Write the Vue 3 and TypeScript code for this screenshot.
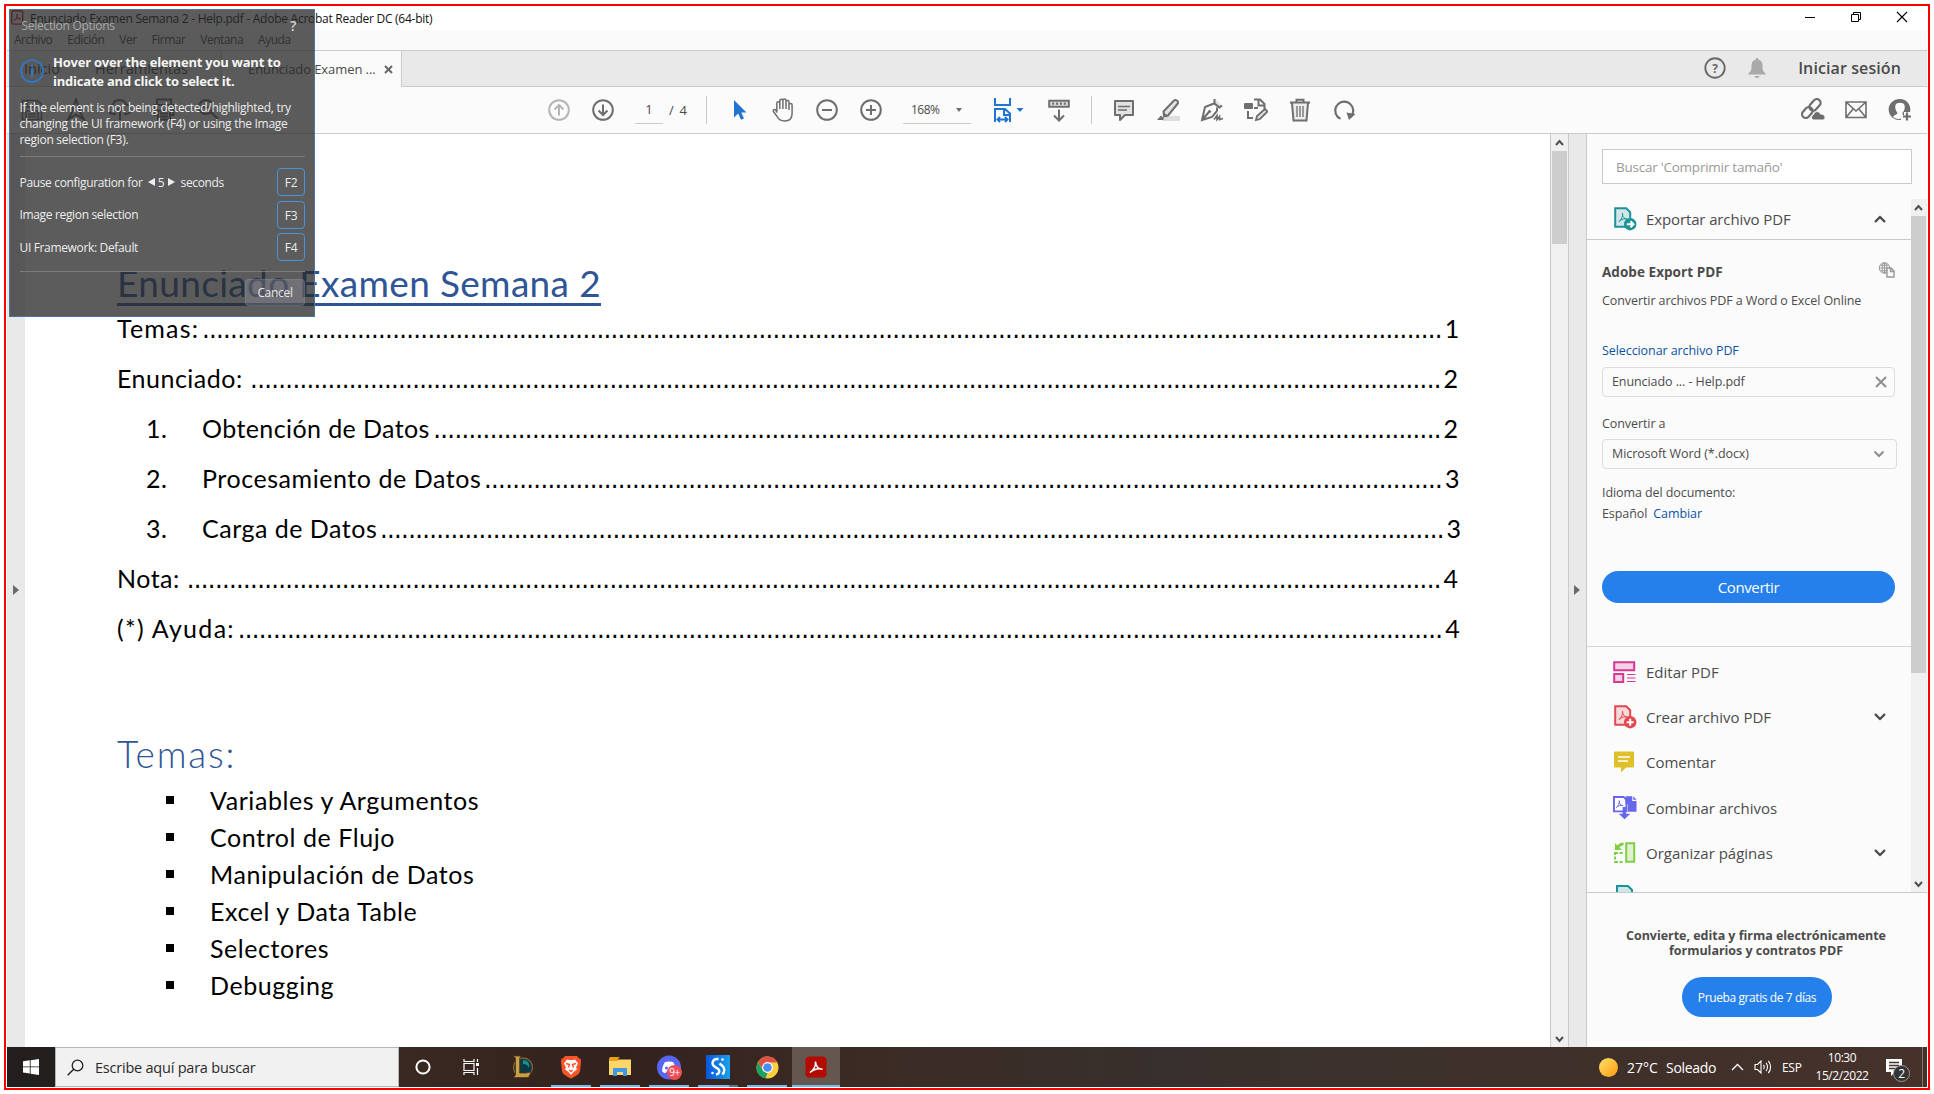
<script setup lang="ts">
interface TocRow { label: string; page: number; dots: number; num?: string }

const menus: string[] = ['Archivo', 'Edición', 'Ver', 'Firmar', 'Ventana', 'Ayuda']
const toc: TocRow[] = [
  { label: 'Temas:', page: 1, dots: 176 },
  { label: 'Enunciado:', page: 2, dots: 169 },
  { label: 'Obtención de Datos', page: 2, dots: 143, num: '1.' },
  { label: 'Procesamiento de Datos', page: 3, dots: 136, num: '2.' },
  { label: 'Carga de Datos', page: 3, dots: 151, num: '3.' },
  { label: 'Nota:', page: 4, dots: 178 },
  { label: '(*) Ayuda:', page: 4, dots: 171 },
]
const topics: string[] = [
  'Variables y Argumentos', 'Control de Flujo', 'Manipulación de Datos',
  'Excel y Data Table', 'Selectores', 'Debugging',
]
const tools = [
  { id: 'edit', label: 'Editar PDF', more: false },
  { id: 'create', label: 'Crear archivo PDF', more: true },
  { id: 'comment', label: 'Comentar', more: false },
  { id: 'combine', label: 'Combinar archivos', more: false },
  { id: 'organize', label: 'Organizar páginas', more: true },
]
const shortcuts = [
  { id: 'pause', label: 'Pause configuration for', key: 'F2' },
  { id: 'image', label: 'Image region selection', key: 'F3' },
  { id: 'frame', label: 'UI Framework: Default', key: 'F4' },
]
</script>

<template>
  <div class="screen">
    <div class="desktop">
      <header class="titlebar">
        <svg class="app-icon" width="13" height="15" viewBox="0 0 13 15"><rect x=".7" y=".7" width="11" height="13.4" rx="2" fill="#fff" stroke="#d3222a" stroke-width="1.4" /><path d="M3 10.500c2-1 3.400-4.200 3.200-6.300M5.800 4.200c0 2.600 1.700 4.800 4 4.600M3 10.500c1.500-1.800 4.300-2.400 6.800-1.700" fill="none" stroke="#d3222a" stroke-width="1" /></svg>
        <span class="title">Enunciado Examen Semana 2 - Help.pdf - Adobe Acrobat Reader DC (64-bit)</span>
        <div class="win-buttons">
          <svg width="12" height="12" viewBox="0 0 12 12"><path d="M1 6.500h10" stroke="#000" /></svg>
          <svg width="12" height="12" viewBox="0 0 12 12"><path d="M1.500 3.500h7v7h-7zM3.500 3.500v-2h7v7h-2" fill="none" stroke="#000" /></svg>
          <svg width="12" height="12" viewBox="0 0 12 12"><path d="M1 1l10 10M11 1L1 11" stroke="#000" stroke-width="1.100" /></svg>
        </div>
      </header>
      <nav class="menubar"><span v-for="m in menus" :key="m">{{ m }}</span></nav>
      <div class="tabs">
        <div class="tab-home">Inicio</div>
        <div class="tab-tools">Herramientas</div>
        <div class="tab-doc"><span>Enunciado Examen ...</span>
          <svg width="9" height="9" viewBox="0 0 9 9"><path d="M1 1l7 7M8 1L1 8" stroke="#666" stroke-width="2" /></svg>
        </div>
        <div class="account">
          <svg width="22" height="22" viewBox="0 0 22 22"><circle cx="11" cy="11" r="9.700" fill="none" stroke="#6a6a6a" stroke-width="1.900" /><text x="11" y="15.500" text-anchor="middle" class="qmark">?</text></svg>
          <svg class="bell" width="18" height="21" viewBox="0 0 18 21"><path d="M9 0c1 0 1.500.7 1.500 1.700 3 .8 4 3 4 6 0 4 .500 5.800 3 7.500V16.500H.5v-1.300c2.500-1.700 3-3.500 3-7.500 0-3 1-5.200 4-6C7.500.7 8 0 9 0zM6.500 18h5c-.3 1.300-1.200 2-2.500 2s-2.200-.7-2.500-2z" fill="#a9a9a9" /></svg>
          <span>Iniciar sesión</span>
        </div>
      </div>

      <div class="toolbar">
        <div class="file-tools">
          <svg width="24" height="24" viewBox="0 0 24 24"><path d="M2.500 2.500h15l4 4v15h-19zM7 3v6h9V3M6 21v-8h12v8M8 16h8M8 18.500h8" fill="none" stroke="#7d7d7d" stroke-width="1.700" /></svg>
          <svg width="24" height="24" viewBox="0 0 24 24"><path d="M12 1.500l2.700 7.500 1 4.500 4.300 8-8-5-8 5 4.300-8 1-4.500z" fill="none" stroke="#6e6e6e" stroke-width="2" /></svg>
          <svg width="24" height="24" viewBox="0 0 24 24"><path d="M8 16H5.500a4.500 4.500 0 01-.8-8.900A7 7 0 0118 6.500a4.800 4.800 0 01.5 9.500H16M12 22V10M8 13.500l4-4 4 4" fill="none" stroke="#6e6e6e" stroke-width="2" /></svg>
          <svg width="24" height="24" viewBox="0 0 24 24"><path d="M5 6V1.500h14V6M5 17H2.500V7h19v10H19M6 12.500h12v9H6zM8 15.500h8M8 18.500h8" fill="none" stroke="#6e6e6e" stroke-width="2" /></svg>
          <svg width="24" height="24" viewBox="0 0 24 24"><circle cx="10" cy="9" r="7" fill="none" stroke="#6e6e6e" stroke-width="2.200" /><path d="M15 14l7 7M7 9h6" stroke="#6e6e6e" stroke-width="2.200" /></svg>
        </div>
        <svg width="24" height="24" viewBox="0 0 24 24"><g fill="none" stroke="#b5b5b5" stroke-width="2"><circle cx="12" cy="12" r="9.800" /><path d="M12 17.500V7.500M7.500 11.500L12 7l4.500 4.500" /></g></svg>
        <svg class="g20" width="24" height="24" viewBox="0 0 24 24"><g fill="none" stroke="#6e6e6e" stroke-width="2"><circle cx="12" cy="12" r="9.800" /><path d="M12 6.500v10M7.500 12.500L12 17l4.500-4.500" /></g></svg>
        <span class="page-no">1</span><span class="page-total">/&nbsp; 4</span>
        <i class="divider d1"></i>
        <svg class="g21" width="24" height="24" viewBox="0 0 24 24"><path d="M6 2v17.500l4.200-4 2.800 6.200 3-1.300-2.700-6h5.200z" fill="#2374d1" /></svg>
        <svg class="g19" width="24" height="24" viewBox="0 0 24 24"><path d="M5.800 14.500V5.200a1.500 1.500 0 013 0V11 2.700a1.500 1.500 0 013.100 0V11 2.500a1.500 1.500 0 013.100 0V11 4a1.500 1.500 0 013 0v8V7a1.500 1.500 0 013.100 0v8.500c0 4.500-2.600 7.500-7.500 7.500-4 0-6-1.500-7.500-4.500l-3.800-5c-.6-1.800 1.200-2.600 2.600-1.300z" fill="#fbfbfb" stroke="#6e6e6e" stroke-width="1.500" /></svg>
        <svg class="g20" width="24" height="24" viewBox="0 0 24 24"><g fill="none" stroke="#6e6e6e" stroke-width="2"><circle cx="12" cy="12" r="9.800" /><path d="M7 12h10" /></g></svg>
        <svg class="g20" width="24" height="24" viewBox="0 0 24 24"><g fill="none" stroke="#6e6e6e" stroke-width="2"><circle cx="12" cy="12" r="9.800" /><path d="M7 12h10M12 7v10" /></g></svg>
        <div class="zoom-select"><span>168%</span><i class="caret"></i></div>
        <svg class="g21" width="34" height="26" viewBox="0 0 34 26"><g fill="none" stroke="#2374d1" stroke-width="2"><path d="M3 1v7h15V1M3 25V12h10l5 4.500V25M12 12v6h6M5.500 22.500h10M8 20l-2.500 2.500L8 25M13 20l2.500 2.500L13 25" /></g><path d="M24.500 11h7L28 15z" fill="#2374d1" /></svg>
        <svg class="g21" width="24" height="24" viewBox="0 0 24 24"><path d="M2.200 2.700h19.600v6H2.200z" fill="#e2e2e2" stroke="#6e6e6e" stroke-width="2" /><path d="M5 5.700h14" stroke="#6e6e6e" stroke-width="2.200" stroke-dasharray="2.200 1.700" /><path d="M12 11.500v11M7 17.500l5 5 5-5" fill="none" stroke="#6e6e6e" stroke-width="2" /></svg>
        <i class="divider d2"></i>
        <svg class="g20" width="24" height="24" viewBox="0 0 24 24"><path d="M3 3h18v14H13l-5 5v-5H3z" fill="#e2e2e2" stroke="#6e6e6e" stroke-width="2" stroke-linejoin="round" /><path d="M6 8.500h12M6 12h9" stroke="#6e6e6e" stroke-width="1.300" /></svg>
        <svg class="g20" width="24" height="24" viewBox="0 0 24 24"><path d="M8 18h16v5H6z" fill="#dedede" /><path d="M7.500 13.500L18 2.600c1.500-1.300 4.500 0 4 2.600L12 17.500l-4 .8z" fill="#e2e2e2" stroke="#6e6e6e" stroke-width="2" /><path d="M7 13.500l5 4.500-5 1.500zM1 22l4-4.500L7.500 20v2z" fill="#6e6e6e" /></svg>
        <svg class="g20" width="24" height="24" viewBox="0 0 24 24"><path d="M16 2l6 6-5 2-4-5z" fill="#dedede" /><path d="M14.500 1v4.500l5 4 2.500-2M14 5.500L5 9 2 22l10-3 5-6v-3.500M2 22l7-8" fill="none" stroke="#6e6e6e" stroke-width="2" /><circle cx="9.500" cy="13.500" r="1.600" fill="#6e6e6e" /><path d="M14 21.500l3-4v4l2.500-3v3l3.500-1" fill="none" stroke="#6e6e6e" stroke-width="1.700" /></svg>
        <svg class="g20" width="24" height="24" viewBox="0 0 24 24"><path d="M10 1.500h6l4.500 4.500v5M14.500 2v5.500h6M10 10h4M4 13v7h5" fill="none" stroke="#6e6e6e" stroke-width="2" /><rect x="0" y="5" width="9" height="6" rx="1" fill="#6e6e6e" /><path d="M12 22l1-4 8-7 2.500 2.500-7.500 7.500z" fill="#e2e2e2" stroke="#6e6e6e" stroke-width="1.800" /></svg>
        <svg class="g20" width="24" height="24" viewBox="0 0 24 24"><path d="M4 5l1.500 17.500h13L20 5" fill="#ececec" stroke="#6e6e6e" stroke-width="2" /><path d="M2 4.500h20M8.500 4V1.800h7V4" fill="none" stroke="#6e6e6e" stroke-width="2" /><path d="M9 8v11M12 8v11M15 8v11" stroke="#6e6e6e" stroke-width="1.300" /></svg>
        <svg class="g20" width="24" height="24" viewBox="0 0 24 24"><path d="M8.500 20.800A9 9 0 1120.500 16" fill="none" stroke="#6e6e6e" stroke-width="2.200" /><path d="M14.500 14.500l9 1.500-6.500 6z" fill="#6e6e6e" /></svg>
        <div class="share">
          <svg width="26" height="24" viewBox="0 0 26 24"><g fill="none" stroke="#6e6e6e" stroke-width="2.200"><rect x="-1" y="0" width="13" height="7.500" rx="3.700" transform="translate(8.500 8.500) rotate(-48)" /><rect x="0" y="0" width="12" height="7.500" rx="3.700" transform="translate(.5 16.500) rotate(-48)" /></g><path d="M13 22a3 3 0 01.5-5.500c1-3.500 5.500-4 7-.5 3 0 4.500 1.500 4.500 3.500 0 1.500-1 2.500-2.500 2.500z" fill="#6e6e6e" stroke="#fafafa" /></svg>
          <svg width="24" height="24" viewBox="0 0 24 24"><path d="M2 4h20v15.500H2zM2 4l10 9 10-9M2 19.500L9 11M22 19.500L15 11" fill="none" stroke="#6e6e6e" stroke-width="1.600" /></svg>
          <svg width="24" height="24" viewBox="0 0 24 24"><path d="M12 1A10.500 10.500 0 1013 21.800V17h3v-3h6A10.500 10.500 0 0012 1z" fill="#6e6e6e" /><path d="M5 19c1-2.500 4.500-2 4.500-4C7 12 7 9 7.500 7c.7-3 8.300-3 9 0 .5 2 .5 5-2 8v5.500c-4 1-7 .5-9.500-1.500z" fill="#fbfbfb" /><path d="M15 18.500h8M19 14.500v8" stroke="#6e6e6e" stroke-width="2.200" /></svg>
        </div>
      </div>

      <main class="work">
        <div class="left-rail"><i class="tri"></i></div>
        <article class="page">
          <h1>Enunciado Examen Semana 2</h1>
          <div v-for="(r, i) in toc" :key="i" class="toc-row">
            <span v-if="r.num" class="toc-num">{{ r.num }}</span>
            <span class="toc-label" :class="'l' + i">{{ r.label }}</span>
            <span class="leader">{{ '.'.repeat(r.dots) }}</span>
            <span class="toc-page">{{ r.page }}</span>
          </div>
          <h2>Temas:</h2>
          <ul><li v-for="t in topics" :key="t"><i class="bullet"></i><span>{{ t }}</span></li></ul>
        </article>
        <div class="scroll doc-scroll">
          <svg width="15" height="17" viewBox="0 0 15 17"><path d="M4 11l3.500-4L11 11" fill="none" stroke="#505050" stroke-width="2" /></svg>
          <i class="thumb"></i>
          <svg class="down" width="15" height="17" viewBox="0 0 15 17"><path d="M4 7l3.500 4L11 7" fill="none" stroke="#505050" stroke-width="2" /></svg>
        </div>
        <div class="splitter"><i class="tri"></i></div>
        <aside class="panel">
          <div class="search">Buscar 'Comprimir tamaño'</div>
          <div class="panel-body">
            <div class="sections">
              <div class="tool-row export-head">
                <svg class="tool-icon" width="24" height="24" viewBox="0 0 24 24"><path d="M2.200 1.200h11l4 4v14.600h-15z" fill="#cfe7e8" stroke="#1c9399" stroke-width="2" /><path d="M6 14.500c2.500-2 4-5 3.500-8.500 0 4 2 6 5 6-3-.6-6 0-8.500 2.500z" fill="none" stroke="#1c9399" /><circle cx="17.200" cy="17.200" r="6.200" fill="#1c9399" /><path d="M13.800 17.200h6M17.500 14.200l3 3-3 3" fill="none" stroke="#fff" stroke-width="2" /></svg>
                <span class="e0">Exportar archivo PDF</span>
                <svg class="chev" width="12" height="9" viewBox="0 0 12 9"><path d="M1 7l5-5 5 5" fill="none" stroke="#444" stroke-width="2.200" /></svg>
              </div>
              <div class="export">
                <div class="export-title"><b>Adobe Export PDF</b>
                  <svg width="17" height="16" viewBox="0 0 17 16"><g fill="none" stroke="#999" stroke-width="1"><circle cx="6.500" cy="6" r="5.200" /><ellipse cx="6.500" cy="6" rx="2.300" ry="5.200" /><path d="M1.500 6h10M2.500 3.300h8M2.500 8.700h8M6.500 1v10" /></g><path d="M9 6h4l3 3v6H9zM12.500 6v3.500H16" fill="#fbfbfb" stroke="#999" stroke-width="1.400" /></svg>
                </div>
                <p class="desc">Convertir archivos PDF a Word o Excel Online</p>
                <p class="pick link">Seleccionar archivo PDF</p>
                <div class="field file"><span>Enunciado ... - Help.pdf</span><svg width="12" height="12" viewBox="0 0 12 12"><path d="M1 1l10 10M11 1L1 11" stroke="#8e8e8e" stroke-width="2" /></svg></div>
                <p class="to">Convertir a</p>
                <div class="field format"><span>Microsoft Word (*.docx)</span><svg width="12" height="8" viewBox="0 0 12 8"><path d="M1.500 1.500L6 6l4.500-4.500" fill="none" stroke="#8e8e8e" stroke-width="2" /></svg></div>
                <p class="lang">Idioma del documento:</p>
                <p class="lang2"><span>Español</span><span class="link">Cambiar</span></p>
                <button class="convert">Convertir</button>
              </div>
              <div class="tool-list">
                <div v-for="t in tools" :key="t.id" class="tool-row">
                  <svg v-if="t.id === 'edit'" class="tool-icon" width="24" height="24" viewBox="0 0 24 24"><path d="M1.200 2.200h20v8h-20zM1.200 14h9v8h-9z" fill="#f5d2e6" stroke="#d83790" stroke-width="2" /><path d="M14 14.500h8.500M14 18h8.500M14 21.500h8.500" stroke="#d83790" stroke-width="1.200" /></svg>
                  <svg v-else-if="t.id === 'create'" class="tool-icon" width="24" height="24" viewBox="0 0 24 24"><path d="M2.200 1.200h11l4 4v14.600h-15z" fill="#f9dada" stroke="#e34850" stroke-width="2" /><path d="M6 14.500c2.500-2 4-5 3.500-8.500 0 4 2 6 5 6-3-.6-6 0-8.500 2.500z" fill="none" stroke="#e34850" /><circle cx="17.200" cy="17.200" r="6.200" fill="#e34850" /><path d="M13.700 17.200h7M17.200 13.700v7" stroke="#fff" stroke-width="2" /></svg>
                  <svg v-else-if="t.id === 'comment'" class="tool-icon" width="24" height="24" viewBox="0 0 24 24"><path d="M3 1.500h17a1 1 0 011 1v14a1 1 0 01-1 1h-7l-5 5v-5H2a1 1 0 01-1-1v-14a1 1 0 011-1z" fill="#dfbf2a" /><path d="M5 7h12M5 11h10" stroke="#fff" stroke-width="1.600" /></svg>
                  <svg v-else-if="t.id === 'combine'" class="tool-icon" width="25" height="25" viewBox="0 0 25 25"><path d="M1 1.500h10l3 3v12H1z" fill="#fff" stroke="#6767ec" stroke-width="2" /><path d="M3.500 12.500c2-1.800 3.200-4 3-7 0 3.200 1.500 5 4 5-2.500-.5-5 0-7 2z" fill="none" stroke="#6767ec" /><path d="M13 .8h7v5h4.500V17h-9V9H13zM21 .8l3.500 3.700H21zM10 12h3.500v7H18l-6 5.800L6 19h4z" fill="#6767ec" /></svg>
                  <svg v-else class="tool-icon" width="24" height="24" viewBox="0 0 24 24"><path d="M13.200 2.200h8v18.500h-8z" fill="#dff0d3" stroke="#7fcf3f" stroke-width="2" /><path d="M2 12h9M2 21h9M2 11v11" fill="none" stroke="#7fcf3f" stroke-width="2" stroke-dasharray="3 1.600" /><path d="M2 2v7h7L6.500 6.500c1-1.600 2.500-2 4-2v-3c-2.300 0-4.500.8-6 3z" fill="#7fcf3f" /></svg>
                  <span>{{ t.label }}</span>
                  <svg v-if="t.more" class="chev" width="12" height="9" viewBox="0 0 12 9"><path d="M1 2l5 5 5-5" fill="none" stroke="#444" stroke-width="2.200" /></svg>
                </div>
                <div class="tool-row cut"><svg class="tool-icon" width="24" height="24" viewBox="0 0 24 24"><path d="M4 1h11l4 4v14H4z" fill="#cfe7e8" stroke="#1c9399" stroke-width="2" /></svg></div>
              </div>
            </div>
            <div class="scroll panel-scroll">
              <svg width="15" height="17" viewBox="0 0 15 17"><path d="M4 11l3.500-4L11 11" fill="none" stroke="#505050" stroke-width="2" /></svg>
              <i class="thumb"></i>
              <svg class="down" width="15" height="17" viewBox="0 0 15 17"><path d="M4 7l3.500 4L11 7" fill="none" stroke="#505050" stroke-width="2" /></svg>
            </div>
          </div>
          <div class="promo"><b class="p1">Convierte, edita y firma electrónicamente</b><b class="p2">formularios y contratos PDF</b><button>Prueba gratis de 7 días</button></div>
        </aside>
      </main>

      <footer class="taskbar">
        <div class="start"><svg width="16" height="16" viewBox="0 0 16 16"><path d="M0 2.200l6.800-.9v6.200H0zM7.600 1.200L16 0v7.500H7.600zM0 8.300h6.800v6.200L0 13.600zM7.600 8.300H16V16l-8.400-1.200z" fill="#fff" /></svg></div>
        <div class="find"><svg width="17" height="17" viewBox="0 0 17 17"><circle cx="10.500" cy="6.500" r="5.300" fill="none" stroke="#222" stroke-width="1.300" /><path d="M6.700 10.300L.7 16.300" stroke="#222" stroke-width="1.400" /></svg><span>Escribe aquí para buscar</span></div>
        <div class="cell"><svg width="18" height="18" viewBox="0 0 18 18"><circle cx="9" cy="9" r="6.600" fill="none" stroke="#fff" stroke-width="2" /></svg></div>
        <div class="cell"><svg width="17" height="16" viewBox="0 0 17 16"><path d="M1 0v2.500h10V0M1 16v-2.500h10V16M1 4.500h10v7H1zM14.500 0v3M14.500 9v7" fill="none" stroke="#fff" stroke-width="1.200" /><path d="M13 4h3v3h-3z" fill="#fff" /></svg></div>
        <div class="cell app lol"><svg width="24" height="24" viewBox="0 0 24 24"><circle cx="13" cy="12.500" r="9.500" fill="#0b3a45" stroke="#826030" stroke-width="1.300" /><path d="M13 5c5 0 7 4 6 8-1-3-3-4-6-4z" fill="#1b8d95" /><path d="M3 1h8l-1.300 2v15h6.500l5-1-2.800 5.500H3.500L5.500 20V3z" fill="#c99f4a" stroke="#4c3513" stroke-width=".8" /></svg></div>
        <div class="cell app open"><svg width="22" height="24" viewBox="0 0 22 24"><path d="M5 1h12l2 2.500 1.500 0 .5 3-1 9.500c-.6 3-3 4.500-9 7.500-6-3-8.400-4.500-9-7.500L1 6.500l.5-3H3z" fill="#fb542b" /><path d="M7 4.500l4 .8 4-.8 3 4-2 4 1 2-3.500 2.500-2.500 3-2.500-3L5 14.500l1-2-2-4z" fill="#fff" /><path d="M6 8.500l3.500 1-1 3M16 8.500l-3.500 1 1 3M9 15l2 1.500 2-1.500" fill="none" stroke="#fb542b" stroke-width="1.400" /></svg></div>
        <div class="cell app open"><svg width="22" height="20" viewBox="0 0 22 20"><path d="M0 2h9l2-2H1z" fill="#e39c12" /><path d="M0 2.500h22V18H0z" fill="#ffd667" /><path d="M0 1h9v3H0z" fill="#e6a317" /><path d="M4 19v-8h14v8h-4v-4H8v4z" fill="#3d9ae2" /></svg></div>
        <div class="cell app open"><svg width="25" height="25" viewBox="0 0 25 25"><circle cx="12" cy="12.500" r="12" fill="#5865f2" /><path d="M8 7c2-.8 6-.8 8 0 2 3 3 6 2.800 9.500-1.300 1-2.500 1.500-3.500 1.600l-.8-1.600h-5l-.8 1.600c-1-.1-2.200-.6-3.500-1.600C5 13 6 10 8 7z" fill="#fff" /><circle cx="9.500" cy="13" r="1.500" fill="#5865f2" /><circle cx="14.500" cy="13" r="1.500" fill="#5865f2" /></svg><span class="count">9+</span></div>
        <div class="cell app open twin"><svg width="24" height="24" viewBox="0 0 24 24"><defs><linearGradient id="sq"><stop offset="0" stop-color="#0757df" /><stop offset="1" stop-color="#1ba1e8" /></linearGradient></defs><path d="M0 0h24v24H0z" fill="url(#sq)" /><path d="M12.500 4H11c-4.500 0-6 5-2.500 7.500l3 2c3 2 2 5.500-1.500 6M13.500 8.500l2.500 2c3 2.500 3 6 .5 9" fill="none" stroke="#fff" stroke-width="2.400" /><circle cx="16.500" cy="4.500" r="1.300" fill="#fff" /><circle cx="6.500" cy="18" r="1.300" fill="#fff" /></svg></div>
        <div class="cell app open"><svg width="23" height="23" viewBox="0 0 23 23"><circle cx="11.500" cy="11.500" r="11" fill="#ffcd40" /><path d="M2 6a11 11 0 0119.300.5H11.500l-4 8z" fill="#dd5144" /><path d="M2 6l5 8.500 4.500 2.500-2 5.400A11 11 0 012 6z" fill="#1ba261" /><circle cx="11.500" cy="11.500" r="5.400" fill="#fff" /><circle cx="11.500" cy="11.500" r="4.300" fill="#4b8bf4" /></svg></div>
        <div class="cell app open current"><svg width="22" height="22" viewBox="0 0 22 22"><rect x=".5" y=".5" width="21" height="21" rx="4" fill="#b30b00" /><path d="M5 16.500c3.500-2 6-6.500 5.500-11 .3 4.500 3 7.500 7 7.700-4-1.200-8.500-.2-12.500 3.300z" fill="none" stroke="#fff" stroke-width="1.500" /></svg></div>
        <div class="tray">
          <i class="sun"></i><span class="temp">27°C</span><span class="sunny">Soleado</span>
          <svg class="up" width="13" height="8" viewBox="0 0 13 8"><path d="M1 7l5.500-5.500L12 7" fill="none" stroke="#fff" stroke-width="1.300" /></svg>
          <svg class="vol" width="18" height="14" viewBox="0 0 18 14"><path d="M1 4.500h2.500L7 1v12L3.500 9.500H1zM9.500 5c1 1 1 3 0 4M12 3c2 2 2 6 0 8M14.300 1c3 3 3 9 0 12" fill="none" stroke="#fff" stroke-width="1.100" /></svg>
          <span class="kb">ESP</span>
          <div class="clock"><span>10:30</span><span>15/2/2022</span></div>
          <div class="notes"><svg width="16" height="17" viewBox="0 0 16 17"><path d="M0 0h16v13H9l-4 4v-4H0z" fill="#fff" /><path d="M3 3.500h10M3 6.500h10M3 9.500h7" stroke="#45342e" stroke-width="1.300" /></svg><span class="badge">2</span></div>
          <i class="peek"></i>
        </div>
      </footer>
    </div>

    <section class="overlay">
      <div class="ov-top"><span>Selection Options</span><b>?</b></div>
      <div class="ov-head">
        <svg width="24" height="24" viewBox="0 0 24 24"><circle cx="12" cy="12" r="11" fill="none" stroke="#3078c8" stroke-width="1.700" /><path d="M12 10v8M12 6v2" stroke="#3078c8" stroke-width="1.800" /></svg>
        <div><b>Hover over the element you want to</b><b>indicate and click to select it.</b></div>
      </div>
      <div class="ov-text"><span>If the element is not being detected/highlighted, try</span><span>changing the UI framework (F4) or using the Image</span><span>region selection (F3).</span></div>
      <div class="ov-keys">
        <div v-for="s in shortcuts" :key="s.id" class="ov-row">
          <span>{{ s.label }}</span>
          <template v-if="s.id === 'pause'"><i class="al"></i><span class="five">5</span><i class="ar"></i><span class="secs">seconds</span></template>
          <kbd>{{ s.key }}</kbd>
        </div>
      </div>
      <button class="cancel">Cancel</button>
    </section>
  </div>
</template>

<style>
html, body { margin: 0; background: #fff; }
</style>

<style scoped>
* { box-sizing: border-box; }
.screen { position: relative; width: 1934px; height: 1094px; padding: 4px; background: #fff; font-family: "Open Sans", "Noto Sans", sans-serif; color: #4b4b4b; white-space: nowrap; overflow: hidden; }
.desktop { width: 1926px; height: 1086px; border: 2px solid #f00; padding: 1px; display: flex; flex-direction: column; }
svg { display: block; flex: none; }
span, b, p { display: block; margin: 0; }
i { display: block; flex: none; }
button { border: 0; padding: 0; font-family: inherit; color: #fff; background: #2680eb; }

.titlebar { height: 23px; flex: none; display: flex; padding-left: 4px; color: #111; font-size: 12px; }
.app-icon { margin-top: 3px; }
.title { margin-left: 6px; line-height: 24px; letter-spacing: -.26px; }
.win-buttons { margin: 4px 19px 0 auto; display: flex; gap: 34px; }
.menubar { height: 21px; flex: none; background: #fafafa; border-bottom: 1px solid #cacaca; display: flex; gap: 15px; padding-left: 7px; font-size: 12px; line-height: 20px; letter-spacing: -.5px; }
.tabs { height: 36px; flex: none; display: flex; background: #e9e9e9; border-bottom: 1px solid #cacaca; font-size: 14.500px; line-height: 36px; }
.tab-home { padding-left: 17px; width: 88px; background: #f0f0f0; }
.tab-tools { width: 127px; border-right: 1px solid #cacaca; background: #f0f0f0; }
.tab-doc { width: 180px; height: 36px; background: #fafafa; border-right: 1px solid #cacaca; display: flex; align-items: center; padding-left: 26px; font-size: 13px; }
.tab-doc span { width: 127px; letter-spacing: -.08px; }
.tab-doc svg { margin-left: 9px; }
.account { margin-left: auto; display: flex; align-items: center; padding: 0 26px 1px 0; }
.qmark { font: bold 12px "Open Sans", sans-serif; fill: #6a6a6a; }
.bell { margin-left: 22px; }
.account span { margin-left: 32px; font-size: 16px; font-weight: 600; letter-spacing: .1px; }

.toolbar { height: 47px; flex: none; background: #fbfbfb; border-bottom: 1px solid #cacaca; display: flex; align-items: center; }
.file-tools { display: flex; gap: 20px; width: 540px; padding-left: 13px; }
.g19 { margin-left: 19px; } .g20 { margin-left: 20px; } .g21 { margin-left: 21px; }
.page-no { margin-left: 20px; width: 28px; height: 28px; border-bottom: 1px solid #cacaca; text-align: center; font-size: 13px; line-height: 27px; }
.page-total { margin-left: 6px; width: 20px; font-size: 13px; letter-spacing: -.3px; }
.divider { width: 1px; height: 28px; background: #cacaca; }
.d1 { margin-left: 17px; } .d2 { margin-left: 20px; }
.zoom-select { margin-left: 20px; width: 68px; height: 28px; border-bottom: 1px solid #cacaca; display: flex; align-items: center; padding-left: 8px; font-size: 12px; }
.zoom-select span { width: 45px; letter-spacing: -.5px; }
.caret { border: 3.5px solid transparent; border-top: 4px solid #6e6e6e; border-bottom: 0; }
.share { margin-left: auto; display: flex; gap: 20px; padding-right: 15px; }
.share svg:first-child { margin-right: -2px; }

.work { height: 913px; flex: none; display: flex; }
.left-rail { width: 18px; background: #e9e9e9; padding: 451px 0 0 6px; }
.tri { width: 0; height: 0; border: 5.5px solid transparent; border-left: 6px solid #6a6a6a; border-right: 0; }
.page { width: 1525px; padding-left: 92px; font-family: Lato, "Open Sans", sans-serif; color: #000; overflow: hidden; }
h1 { margin: 130px 0 0; width: 484px; height: 42px; border-bottom: 3px solid #2f5597; color: #2f5597; font-size: 37px; font-weight: 400; line-height: 37px; letter-spacing: .34px; }
.toc-row { display: flex; align-items: baseline; width: 1341px; height: 50px; line-height: 50px; font-size: 25px; letter-spacing: .5px; }
h1 + .toc-row { margin-top: -3px; }
.toc-num { flex: none; width: 56px; margin-left: 29px; }
.toc-label { flex: none; }
.l0 { letter-spacing: 1.200px; } .l6 { letter-spacing: 1.300px; } .l3 { letter-spacing: .550px; } .l2 { letter-spacing: .4px; }
.leader { margin-left: auto; font-family: "Liberation Mono", monospace; font-size: 22px; letter-spacing: -6.157px; }
.toc-page { flex: none; width: 20px; text-align: right; letter-spacing: 0; }
h2 { margin: 76px 0 0; height: 52px; line-height: 50px; font-weight: 300; font-size: 37px; letter-spacing: 1.800px; color: #2f5597; }
ul { margin: 0; padding: 0; list-style: none; }
li { height: 37px; display: flex; align-items: center; font-size: 25px; letter-spacing: .57px; padding-left: 49px; }
.bullet { width: 8px; height: 8px; background: #000; margin-right: 36px; }

.scroll { background: #f0f0f0; display: flex; flex-direction: column; flex: none; }
.doc-scroll { width: 19px; border: solid #cacaca; border-width: 0 1px; padding-left: 1px; }
.thumb { width: 15px; background: #cdcdcd; }
.doc-scroll .thumb { height: 93px; }
.down { margin-top: auto; }
.splitter { width: 18px; background: #e9e9e9; border-right: 1px solid #cacaca; padding: 451px 0 0 5px; }
.panel { width: 340px; background: #fbfbfb; display: flex; flex-direction: column; }
.search { margin: 15px 0 0 15px; width: 310px; height: 35px; border: 1px solid #cacaca; background: #fff; padding-left: 13px; line-height: 34px; font-size: 13.500px; letter-spacing: -.24px; color: #9a9a9a; }
.panel-body { margin-top: 15px; height: 694px; border-bottom: 1px solid #cacaca; display: flex; overflow: hidden; }
.sections { width: 324px; overflow: hidden; }
.tool-row { display: flex; align-items: center; padding-left: 26px; height: 45.300px; font-size: 15px; }
.tool-row span { margin-left: 9px; }
.tool-icon { width: 24px; }
.chev { margin: 0 25px 0 auto; }
.export-head { height: 41px; border-bottom: 1px solid #cacaca; letter-spacing: -.12px; }
.export { padding: 23px 15px 0; height: 407px; border-bottom: 1px solid #d5d5d5; font-size: 12.500px; line-height: 18px; letter-spacing: -.08px; }
.export-title { display: flex; font-size: 13.500px; height: 18px; letter-spacing: .05px; }
.export-title svg { margin: -1px 1px 0 auto; }
.desc { margin-top: 11px; }
.pick { margin-top: 32px; }
.link { color: #0d53a5; }
.field { width: 293px; height: 30px; border: 1px solid #dcdcdc; border-radius: 4px; display: flex; align-items: center; justify-content: space-between; padding: 0 7px 0 9px; }
.file { margin-top: 7px; }
.to { margin-top: 18px; }
.format { margin-top: 6px; width: 295px; padding-right: 11px; }
.lang { margin-top: 15px; }
.lang2 { display: flex; gap: 6px; margin-top: 3px; }
.convert { display: block; margin-top: 48px; width: 293px; height: 32px; border-radius: 16px; font-size: 15px; letter-spacing: -.4px; }
.tool-list { padding-top: 2px; }
.cut { align-items: flex-start; padding-top: 10px; }
.panel-scroll { width: 16px; padding-left: 0; }
.panel-scroll .thumb { height: 457px; }
.promo { display: flex; flex-direction: column; align-items: center; padding: 35px 2px 0 0; font-size: 12.500px; line-height: 15px; letter-spacing: -.03px; }
.promo button { margin: 19px -2px 0 0; width: 150px; height: 40px; border-radius: 20px; font-size: 12px; letter-spacing: -.4px; }

.taskbar { height: 40px; flex: none; display: flex; background: linear-gradient(90deg, #231f1e 0, #3a2922 20%, #33211d 32%, #3c2b25 45%, #38302d 60%, #40302a 85%, #46322b); color: #fff; }
.start { width: 48px; display: flex; align-items: center; justify-content: center; background: #231f1e; }
.find { width: 344px; background: #f1f1f1; border: 1px solid #b5b5b5; color: #2b2b2b; display: flex; align-items: center; padding-left: 11px; font-size: 14.500px; letter-spacing: -.22px; }
.find span { margin-left: 11px; }
.cell { width: 48px; height: 40px; display: flex; align-items: center; justify-content: center; position: relative; }
.app { margin-left: 1px; }
.lol { margin-left: 3px; }
.open::after { content: ""; position: absolute; left: 4px; right: 4px; bottom: 0; height: 2px; background: #76b9ed; }
.twin::after { background: linear-gradient(90deg, #76b9ed 31px, #56788f 31px); }
.current { background: #65564f; }
.current::after { left: 0; right: 0; }
.count { position: absolute; left: 22px; top: 18px; width: 15px; height: 15px; border-radius: 50%; background: #ed4d56; font-size: 10px; line-height: 14px; text-align: center; letter-spacing: -.4px; }
.tray { margin-left: auto; display: flex; align-items: center; font-size: 14px; letter-spacing: -.3px; }
.sun { width: 19px; height: 19px; border-radius: 50%; background: linear-gradient(135deg, #ffe26a, #ff9a0f); }
.temp { width: 29px; margin-left: 9px; letter-spacing: 0; } .sunny { width: 50px; margin-left: 10px; }
.up { margin-left: 15px; } .vol { margin-left: 10px; }
.kb { width: 19px; margin-left: 10px; font-size: 12px; }
.clock { width: 54px; margin-left: 14px; font-size: 12px; line-height: 18px; display: flex; flex-direction: column; align-items: center; letter-spacing: -.42px; }
.notes { position: relative; margin-left: 17px; width: 36px; }
.badge { position: absolute; left: 7px; top: 6px; width: 17px; height: 17px; border-radius: 50%; border: 1px solid #999; background: #333; font-size: 12px; line-height: 15px; text-align: center; }
.peek { width: 1px; height: 40px; background: #85766f; margin-right: 4px; }

.overlay { position: absolute; left: 9px; top: 9px; width: 306px; height: 308px; background: rgba(41, 41, 41, .76); border: 1px solid #4d7599; padding: 0 9px 0 9.500px; color: #ececec; display: flex; flex-direction: column; letter-spacing: -.29px; }
.ov-top { display: flex; justify-content: space-between; margin-top: 7px; height: 17px; line-height: 17px; font-size: 12px; color: #a8a8a8; padding: 0 9px 0 2px; }
.ov-top b { font-size: 14px; font-weight: 600; color: #d5d5d5; }
.ov-head { display: flex; gap: 9.500px; margin-top: 19px; height: 41px; line-height: 19px; font-size: 13px; letter-spacing: -.22px; color: #f5f5f5; }
.ov-head svg { margin-top: 6px; }
.ov-text { margin-top: 6px; line-height: 16px; font-size: 12px; padding-bottom: 8px; border-bottom: 1px solid #7c7c7c; }
.ov-keys { margin-top: 11px; border-bottom: 1px solid #7c7c7c; padding-bottom: 10px; }
.ov-row { display: flex; align-items: center; height: 28px; margin-bottom: 4.700px; font-size: 12px; letter-spacing: -.34px; }
.ov-row:last-child { margin-bottom: 0; }
kbd { margin-left: auto; width: 28px; height: 28px; border: 1px solid #4a94d6; border-radius: 4px; text-align: center; line-height: 27px; font-family: inherit; font-size: 12px; }
.al, .ar { border: 4.500px solid transparent; }
.al { border-right: 7px solid #eee; border-left: 0; margin-left: 5px; }
.ar { border-left: 7px solid #eee; border-right: 0; }
.five { width: 13px; text-align: center; }
.secs { margin-left: 6px; }
.cancel { align-self: flex-end; margin-top: 7px; width: 60px; height: 27px; border-radius: 4px; background: rgba(160, 160, 180, .3); border: 1px solid rgba(190, 190, 200, .15); font-size: 12px; color: #e5e5e5; letter-spacing: -.31px; }
</style>
